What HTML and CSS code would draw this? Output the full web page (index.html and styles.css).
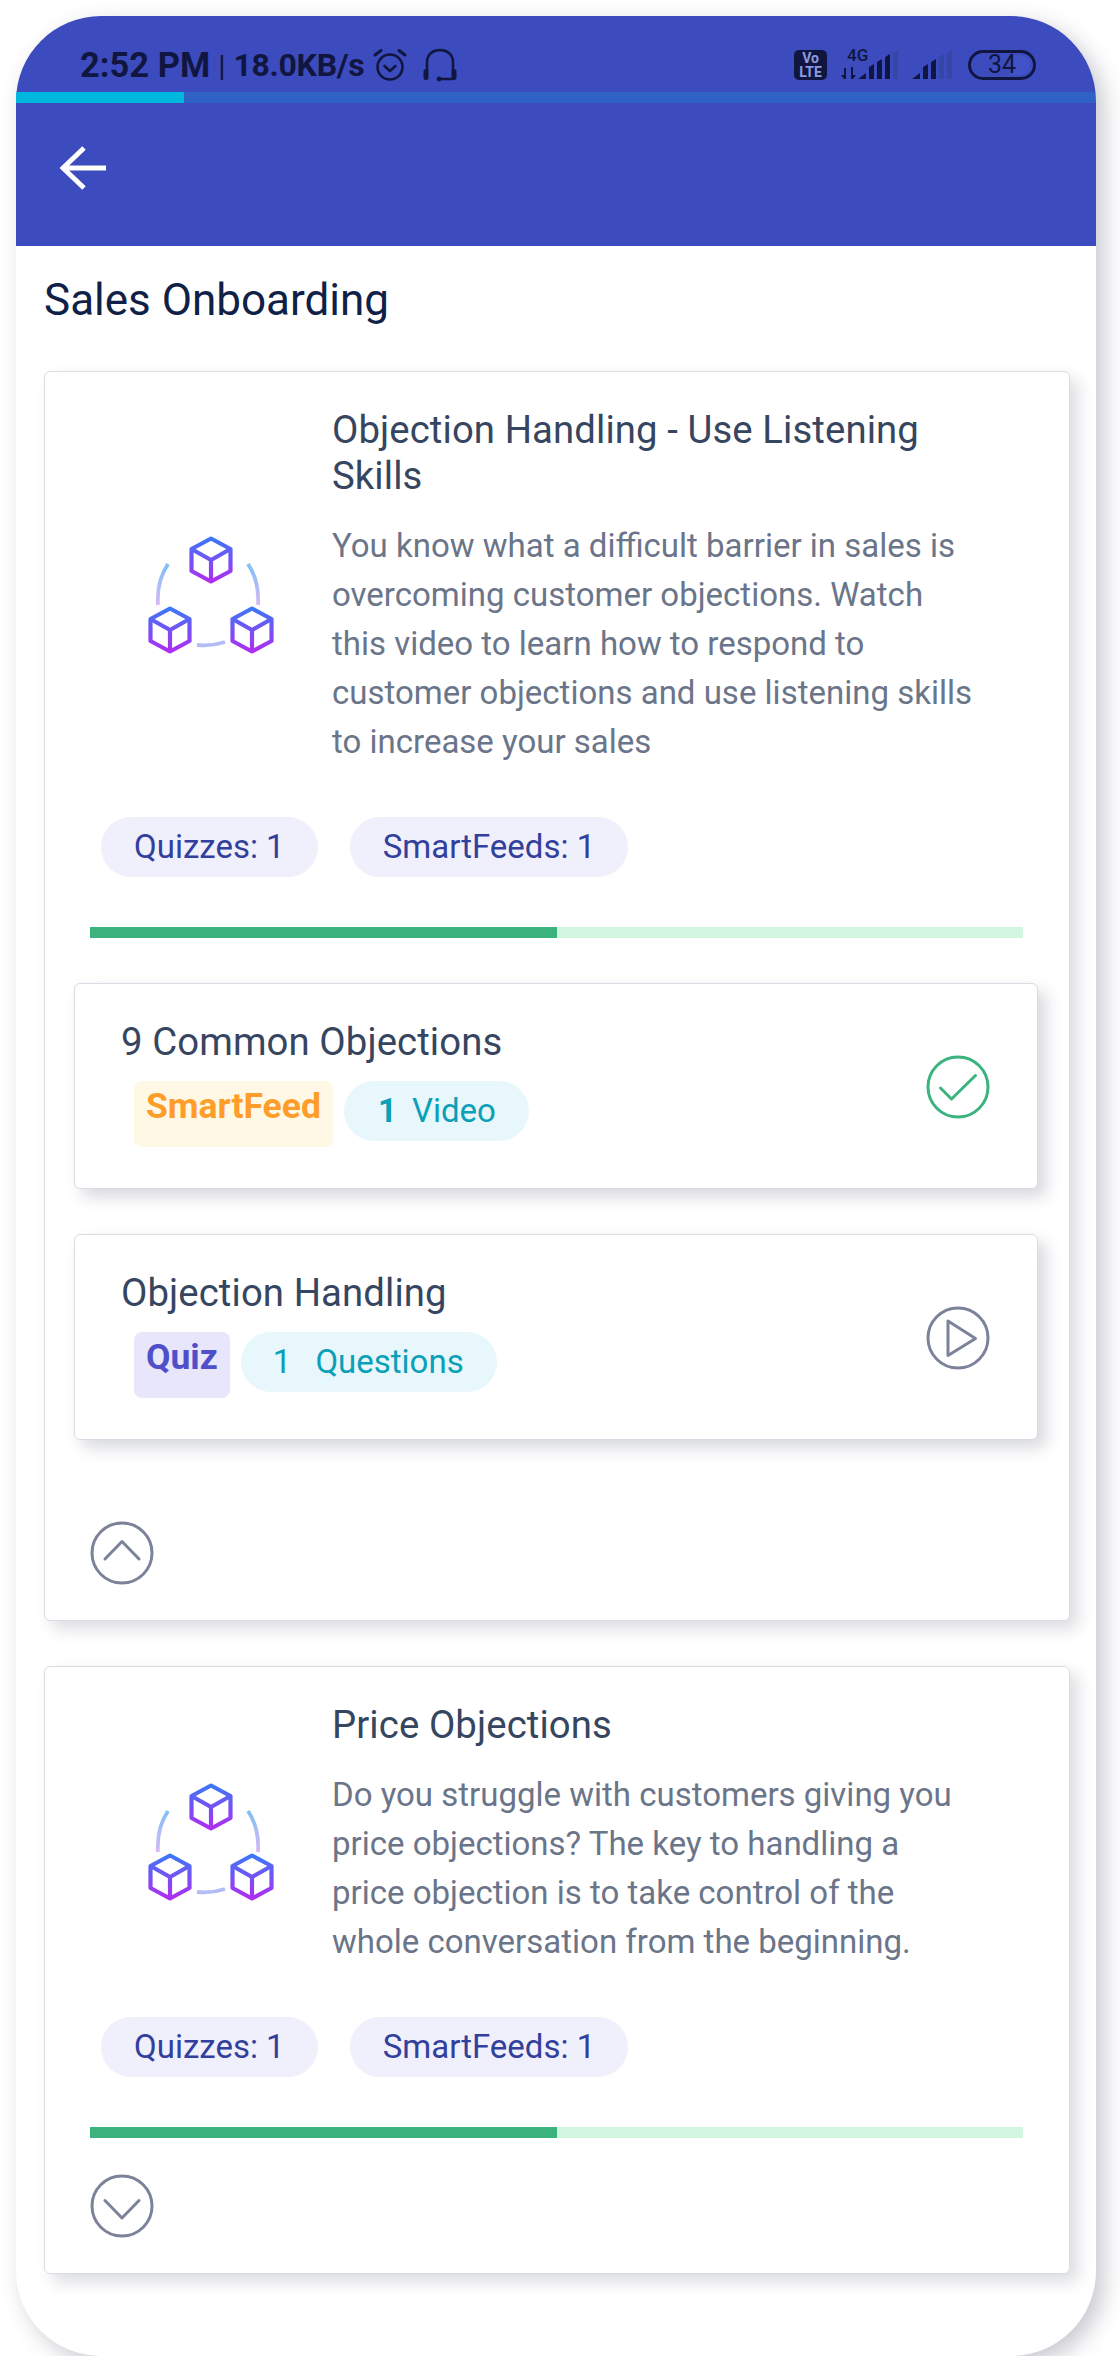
FILE: index.html
```html
<!DOCTYPE html>
<html lang="en">
  <head>
    <meta charset="UTF-8" />
    <meta name="viewport" content="width=device-width, initial-scale=1.0" />
    <title>Sales Onboarding</title>
    <link rel="stylesheet" href="styles.css">
  </head>
  <body>
    <svg class="defs" width="0" height="0">
      <defs>
        <linearGradient id="cube-fill" gradientUnits="userSpaceOnUse" x1="0" y1="-22" x2="0" y2="22">
          <stop offset="0" stop-color="#3b78f7" />
          <stop offset="1" stop-color="#b02cf0" />
        </linearGradient>
        <linearGradient id="arc-fill" gradientUnits="userSpaceOnUse" x1="0" y1="50" x2="0" y2="95">
          <stop offset="0" stop-color="#7cc0f5" />
          <stop offset="1" stop-color="#dcb8f5" />
        </linearGradient>
        <g id="cube" fill="none" stroke="url(#cube-fill)" stroke-width="4.2" stroke-linejoin="round">
          <path d="M0 -21.5 L19.5 -11 V11 L0 21.5 L-19.5 11 V-11 Z" />
          <path d="M-19.5 -11 L0 0 L19.5 -11 M0 0 V21.5" />
        </g>
        <g id="net">
          <use href="#cube" x="91" y="48" />
          <use href="#cube" x="50" y="118" />
          <use href="#cube" x="132" y="118" />
          <path d="M48 52 C40 64 37 78 38 93 M128 52 C136 64 139 78 138 93" fill="none" stroke="url(#arc-fill)" stroke-width="3.8" />
          <path d="M77 133 C86 134 96 133 105 130" fill="none" stroke="#b4bcf6" stroke-width="3.8" />
        </g>
      </defs>
    </svg>

    <div class="phone">
      <div class="statusbar">
        <div class="status-left">
          <span class="clock">2:52 PM</span>
          <span class="sep">|</span>
          <span class="speed">18.0KB/s</span>
          <svg class="st-icon" width="36" height="36" viewBox="0 0 36 36" fill="none" stroke="#10163f" stroke-width="2.6" stroke-linecap="round" stroke-linejoin="round">
            <circle cx="18" cy="20" r="12.5" />
            <path d="M12.5 19 L18 24 L23.5 19" />
            <path d="M3 8 L9 3.5 M33 8 L27 3.5" stroke-width="3" />
          </svg>
          <svg class="st-icon headset" width="36" height="36" viewBox="0 0 36 36" fill="none" stroke="#10163f" stroke-width="2.6" stroke-linecap="round">
            <path d="M5 24 V15 C5 -1 31 -1 31 15 V24" />
            <rect x="1.5" y="22" width="5" height="11" rx="2.5" fill="#10163f" stroke="none" />
            <rect x="29.5" y="22" width="5" height="11" rx="2.5" fill="#10163f" stroke="none" />
            <path d="M31 32 H18" />
            <circle cx="17" cy="32" r="2.4" fill="#10163f" stroke="none" />
          </svg>
        </div>
        <div class="status-right">
          <div class="volte"><span>Vo</span><span>LTE</span></div>
          <div class="net-type">
            <span class="net-label">4G</span>
            <svg width="60" height="30" viewBox="-3 0 60 30">
              <path d="M2 29 H0 L-3 25 H0 V18 H2 Z M7 17 H9 V25 H12 L9 29 H7 Z" fill="#10163f" />
              <path d="M14 29 L22 23 V29 Z M25 17 L30 14 V29 H25 Z M33 12 L38 9 V29 H33 Z M41 7 L46 4 V29 H41 Z" fill="#10163f" />
              <path d="M49 3 L54 0 V29 H49 Z" fill="#3446a6" />
            </svg>
          </div>
          <svg class="signal" width="41" height="30" viewBox="0 0 41 30">
            <path d="M0 29 L8 23 V29 Z M11 17 L16 14 V29 H11 Z M19 12 L24 9 V29 H19 Z" fill="#10163f" />
            <path d="M27 7 L32 4 V29 H27 Z M35 3 L40 0 V29 H35 Z" fill="#3446a6" />
          </svg>
          <div class="battery"><span class="battery-level"></span><span class="battery-num">34</span></div>
        </div>
      </div>
      <div class="loadbar"><div class="loadbar-fill"></div></div>
      <div class="appbar">
        <svg width="46" height="46" viewBox="0 0 46 46" fill="none" stroke="#fff" stroke-width="5">
          <path d="M24 3 L3 23 L24 43 M3 23 H46" />
        </svg>
      </div>

      <h1 class="page-title">Sales Onboarding</h1>

      <div class="card">
        <div class="card-top">
          <svg class="module-icon" width="180" height="160" viewBox="0 0 180 160"><use href="#net" /></svg>
          <div class="card-text">
            <h2>Objection Handling - Use Listening Skills</h2>
            <p>You know what a difficult barrier in sales is overcoming customer objections. Watch this video to learn how to respond to customer objections and use listening skills to increase your sales</p>
          </div>
        </div>
        <div class="pills">
          <span class="pill">Quizzes: 1</span>
          <span class="pill">SmartFeeds: 1</span>
        </div>
        <div class="progress"><div class="progress-fill" style="width: 50%"></div></div>

        <div class="lessons">
          <div class="lesson">
            <div class="lesson-body">
              <h3>9 Common Objections</h3>
              <div class="tags">
                <span class="tag tag-feed">SmartFeed</span>
                <span class="chip chip-video"><b>1</b><span>Video</span></span>
              </div>
            </div>
            <svg width="64" height="64" viewBox="0 0 64 64" fill="none" stroke="#3ab37f" stroke-width="3" stroke-linecap="round" stroke-linejoin="round">
              <circle cx="32" cy="32" r="30" />
              <path d="M14.5 33 L25.5 44 L49.5 20.5" />
            </svg>
          </div>
          <div class="lesson">
            <div class="lesson-body">
              <h3>Objection Handling</h3>
              <div class="tags">
                <span class="tag tag-quiz">Quiz</span>
                <span class="chip chip-questions"><span>1</span><span>Questions</span></span>
              </div>
            </div>
            <svg width="64" height="64" viewBox="0 0 64 64" fill="none" stroke="#7b8299" stroke-width="3" stroke-linecap="round" stroke-linejoin="round">
              <circle cx="32" cy="32" r="30" />
              <path d="M22 15 L49.5 32.5 L22 49.5 Z" />
            </svg>
          </div>
        </div>

        <svg class="toggle" width="64" height="64" viewBox="0 0 64 64" fill="none" stroke="#7b8299" stroke-width="3" stroke-linecap="round" stroke-linejoin="round">
          <circle cx="32" cy="32" r="30" />
          <path d="M15 38 L32 20.5 L49 38" />
        </svg>
      </div>

      <div class="card">
        <div class="card-top">
          <svg class="module-icon" width="180" height="160" viewBox="0 0 180 160"><use href="#net" /></svg>
          <div class="card-text">
            <h2>Price Objections</h2>
            <p>Do you struggle with customers giving you price objections? The key to handling a price objection is to take control of the whole conversation from the beginning.</p>
          </div>
        </div>
        <div class="pills">
          <span class="pill">Quizzes: 1</span>
          <span class="pill">SmartFeeds: 1</span>
        </div>
        <div class="progress"><div class="progress-fill" style="width: 50%"></div></div>

        <svg class="toggle" width="64" height="64" viewBox="0 0 64 64" fill="none" stroke="#7b8299" stroke-width="3" stroke-linecap="round" stroke-linejoin="round">
          <circle cx="32" cy="32" r="30" />
          <path d="M15 26.5 L32 44 L49 26.5" />
        </svg>
      </div>
    </div>
  </body>
</html>
```

FILE: styles.css
```css
body {
  margin: 0;
  background-color: #fff;
  font-family: Roboto, "Liberation Sans", sans-serif;
  color: #333;
}
h1,
h2,
h3,
p {
  margin: 0;
  font-weight: 400;
}
.defs {
  display: block;
  height: 0;
}
.phone {
  width: 1080px;
  height: 2340px;
  margin: 16px 0 0 16px;
  border-radius: 85px;
  overflow: hidden;
  background-color: #fff;
  box-shadow: 8px 8px 22px rgba(40, 45, 70, 0.25);
}

/* status bar */
.statusbar {
  height: 76px;
  box-sizing: border-box;
  padding: 28px 60px 0 64px;
  display: flex;
  justify-content: space-between;
  align-items: flex-start;
  background-color: #3c4bbd;
  color: #10163f;
}
.status-left {
  display: flex;
  align-items: center;
  height: 36px;
  margin-top: 3px;
  font-size: 34.5px;
  font-weight: 700;
}
.sep {
  margin: 0 8px;
  font-weight: 400;
  font-size: 30px;
}
.speed {
  margin-right: 7px;
  font-size: 32px;
  letter-spacing: -0.3px;
}
.st-icon {
  flex-shrink: 0;
}
.headset {
  margin-left: 14px;
}
.status-right {
  display: flex;
  align-items: flex-end;
  height: 36px;
}
.volte {
  width: 33px;
  height: 30px;
  margin-right: 14px;
  border-radius: 5px;
  background-color: #10163f;
  color: #8d9be0;
  font-size: 14px;
  font-weight: 700;
  line-height: 14px;
  text-align: center;
  display: flex;
  flex-direction: column;
  justify-content: center;
}
.net-type {
  position: relative;
  margin-right: 11px;
  height: 30px;
}
.net-label {
  position: absolute;
  left: 6px;
  top: -4px;
  font-size: 17px;
  font-weight: 500;
  line-height: 18px;
}
.net-type svg,
.signal {
  display: block;
}
.signal {
  margin-right: 15px;
}
.battery {
  position: relative;
  width: 68px;
  height: 30px;
  box-sizing: border-box;
  border: 3px solid #10163f;
  border-radius: 15px;
  display: flex;
  align-items: center;
  justify-content: center;
}
.battery-level {
  position: absolute;
  right: 3px;
  top: 2px;
  bottom: 2px;
  width: 20px;
  border-radius: 0 10px 10px 0;
  background-color: #4253c8;
}
.battery-num {
  position: relative;
  font-size: 25px;
  line-height: 24px;
}
.loadbar {
  height: 11px;
  background-color: #2f62c4;
}
.loadbar-fill {
  width: 168px;
  height: 100%;
  background-color: #00b8dd;
}
.appbar {
  height: 143px;
  box-sizing: border-box;
  padding: 42px 0 0 44px;
  background-color: #3c4bbd;
}
.appbar svg {
  display: block;
}

.page-title {
  margin: 31px 0 48px 28px;
  font-size: 44px;
  line-height: 46px;
  color: #0f2147;
}

/* module cards */
.card {
  width: 1026px;
  box-sizing: border-box;
  margin: 0 0 45px 28px;
  padding-bottom: 35px;
  background-color: #fff;
  border: 1px solid #d9dce5;
  border-radius: 6px;
  box-shadow: 8px 8px 16px rgba(40, 45, 70, 0.16);
}
.card-top {
  display: flex;
  align-items: center;
  padding: 35px 0 0 75px;
}
.module-icon {
  flex-shrink: 0;
  margin-top: 10px;
  margin-right: 32px;
}
.card-text {
  width: 645px;
}
.card-text h2 {
  font-size: 38.3px;
  line-height: 46px;
  letter-spacing: 0.1px;
  color: #364560;
  margin-bottom: 22px;
}
.card-text p {
  font-size: 33px;
  line-height: 49px;
  color: #6b7589;
}
.pills {
  display: flex;
  gap: 32px;
  margin: 51px 0 0 56px;
}
.pill {
  height: 60px;
  padding: 0 33px;
  border-radius: 30px;
  background-color: #eff0fb;
  color: #333f9c;
  font-size: 33px;
  line-height: 60px;
}
.progress {
  width: 933px;
  height: 11px;
  margin: 50px 0 0 45px;
  background-color: #d1f6e0;
}
.progress-fill {
  height: 100%;
  background-color: #3ab37f;
}

/* lessons inside a card */
.lessons {
  display: flex;
  flex-direction: column;
  gap: 45px;
  margin: 45px 0 81px 29px;
}
.lesson {
  width: 964px;
  height: 206px;
  box-sizing: border-box;
  padding: 35px 47px 0 46px;
  display: flex;
  justify-content: space-between;
  background-color: #fff;
  border: 1px solid #d9dce5;
  border-radius: 6px;
  box-shadow: 8px 8px 16px rgba(40, 45, 70, 0.18);
}
.lesson svg {
  flex-shrink: 0;
  margin-top: 36px;
}
.lesson h3 {
  font-size: 38.3px;
  line-height: 46px;
  letter-spacing: 0.1px;
  color: #364560;
}
.tags {
  display: flex;
  gap: 11px;
  margin: 16px 0 0 13px;
}
.tag {
  height: 66px;
  box-sizing: border-box;
  padding: 0 12px;
  border-radius: 8px;
  font-size: 35.5px;
  font-weight: 700;
  line-height: 50px;
}
.tag-feed {
  background-color: #fff8e5;
  color: #ff9d2a;
}
.tag-quiz {
  background-color: #e7e6fb;
  color: #4f4fc9;
}
.chip {
  height: 60px;
  padding: 0 33px 0 34px;
  border-radius: 30px;
  background-color: #e8f7fc;
  color: #0c9fb8;
  font-size: 33px;
  line-height: 60px;
  display: flex;
  gap: 15px;
}
.chip-questions {
  gap: 24px;
  padding-left: 32px;
}
.toggle {
  display: block;
  margin: 36px 0 0 45px;
}
```
